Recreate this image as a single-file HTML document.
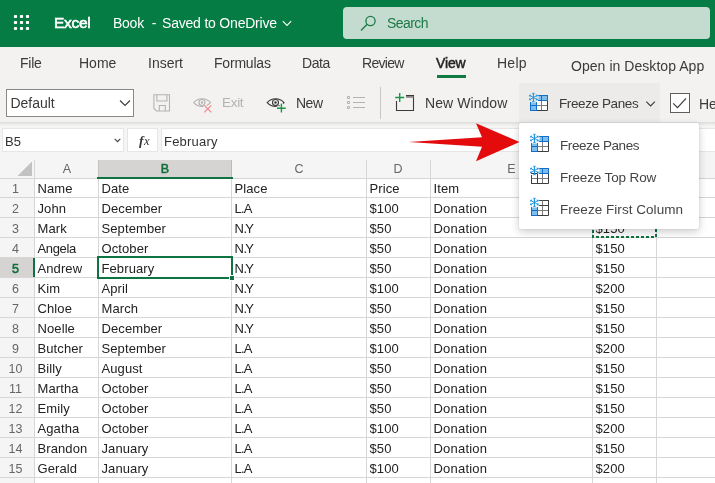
<!DOCTYPE html>
<html><head><meta charset="utf-8"><title>Excel</title>
<style>
*{box-sizing:border-box;margin:0;padding:0}
html,body{width:715px;height:483px;overflow:hidden;background:#fff;font-family:"Liberation Sans",sans-serif;}
body{position:relative}
.abs{position:absolute}
#hdr{position:absolute;left:0;top:0;width:715px;height:47px;background:#047c43}
#search{position:absolute;left:343px;top:7px;width:367px;height:32px;background:#c4dccf;border-radius:4px}
#searcht{position:absolute;left:44px;top:7px;font-size:14px;color:#1b7a47;line-height:18px}
.ht{position:absolute;top:12px;font-size:14px;color:#fff;line-height:22px;white-space:nowrap}
#excel{left:54px;font-size:16px;-webkit-text-stroke:0.6px #fff;letter-spacing:-0.2px}
#tabs{position:absolute;left:0;top:47px;width:715px;height:35px;background:#f3f2f1}
.tab{position:absolute;top:6px;font-size:14px;line-height:20px;color:#3b3a39;white-space:nowrap}
#ribbon{position:absolute;left:0;top:82px;width:715px;height:40px;background:#f3f2f1}
.rt{position:absolute;font-size:14px;line-height:20px;color:#3b3a39;white-space:nowrap;top:11px}
#fbar{position:absolute;left:0;top:122px;width:715px;height:38px;background:#f5f5f5}
.fbox{position:absolute;top:6px;height:24px;background:#fff;border:1px solid #e6e6e6}
.ft{position:absolute;top:10px;font-size:13px;line-height:20px;color:#333;white-space:nowrap}
#grid{position:absolute;left:0;top:0;width:715px;height:483px}
#grid,#hdr,#tabs,#ribbon,#fbar,#menu{will-change:transform}
.ch{position:absolute;top:161px;height:17px;font-size:12.5px;line-height:17px;color:#666;text-align:center}
.rh{position:absolute;left:0;width:34px;height:20px;font-size:12.5px;line-height:22px;color:#666;text-align:center;padding-right:3px}
.rh.sel{background:#d6d4d2;color:#0e703b;-webkit-text-stroke:0.55px #0e703b;height:19px;line-height:22px;border-right:2px solid #0d7341;width:35px;padding-right:2px}
.c{position:absolute;font-size:13px;letter-spacing:0.1px;line-height:22px;color:#222;white-space:nowrap;height:20px}
.hl{position:absolute;left:0;width:715px;height:1px;background:#d6d6d6}
.vl{position:absolute;top:160px;width:1px;height:323px;background:#d6d6d6}
#menu{position:absolute;left:519px;top:123px;width:180px;height:106px;background:#fff;border-radius:2px;box-shadow:0 3px 9px rgba(0,0,0,.20),0 0 2px rgba(0,0,0,.14)}
.mi{position:absolute;left:41px;font-size:14px;line-height:20px;color:#444;white-space:nowrap}
</style></head><body>

<div id="grid">
<div class="abs" style="left:0;top:160px;width:715px;height:19px;background:#f5f5f5"></div>
<div class="abs" style="left:0;top:160px;width:34px;height:323px;background:#f5f5f5"></div>
<div class="abs" style="left:98px;top:160px;width:133px;height:18px;background:#d6d4d2"></div>
<div class="abs" style="left:98px;top:160px;width:1px;height:17px;background:#c3c2c1;z-index:1"></div><div class="abs" style="left:231px;top:160px;width:1px;height:17px;background:#bcbbba;z-index:1"></div>
<div class="hl" style="top:178px"></div><div class="hl" style="top:197px"></div><div class="hl" style="top:217px"></div><div class="hl" style="top:237px"></div><div class="hl" style="top:257px"></div><div class="hl" style="top:277px"></div><div class="hl" style="top:297px"></div><div class="hl" style="top:317px"></div><div class="hl" style="top:337px"></div><div class="hl" style="top:357px"></div><div class="hl" style="top:377px"></div><div class="hl" style="top:397px"></div><div class="hl" style="top:417px"></div><div class="hl" style="top:437px"></div><div class="hl" style="top:457px"></div><div class="hl" style="top:477px"></div><div class="hl" style="top:497px"></div>
<div class="vl" style="left:34px"></div><div class="vl" style="left:98px"></div><div class="vl" style="left:231px"></div><div class="vl" style="left:366px"></div><div class="vl" style="left:430px"></div><div class="vl" style="left:592px"></div><div class="vl" style="left:656px"></div>
<div class="abs" style="left:97px;top:177px;width:136px;height:2px;background:#0d7341"></div>
<svg class="abs" style="left:17px;top:161px" width="16" height="16" viewBox="0 0 16 16"><path d="M15 0.500V15H0.500z" fill="#c2c2c2"/></svg>
<div class="ch" style="left:35px;width:64px">A</div>
<div class="ch" style="left:98px;width:134px;color:#0e703b;-webkit-text-stroke:0.55px #0e703b">B</div>
<div class="ch" style="left:232px;width:134px">C</div>
<div class="ch" style="left:366px;width:64px">D</div>
<div class="ch" style="left:430.5px;width:162px">E</div>
<div class="rh" style="top:178px">1</div><div class="c" id="c1_0" style="left:37.5px;top:178px">Name</div><div class="c" id="c1_1" style="left:101.5px;top:178px">Date</div><div class="c" id="c1_2" style="left:234.5px;top:178px">Place</div><div class="c" id="c1_3" style="left:369.5px;top:178px">Price</div><div class="c" id="c1_4" style="left:433.5px;top:178px">Item</div>
<div class="rh" style="top:198px">2</div><div class="c" id="c2_0" style="left:37.5px;top:198px">John</div><div class="c" id="c2_1" style="left:101.5px;top:198px">December</div><div class="c" id="c2_2" style="left:234.5px;top:198px">L<span style="margin-left:-0.8px;margin-right:-1px">.</span>A</div><div class="c" id="c2_3" style="left:369.5px;top:198px">$100</div><div class="c" id="c2_4" style="letter-spacing:0.2px;left:433.5px;top:198px">Donation</div>
<div class="rh" style="top:218px">3</div><div class="c" id="c3_0" style="left:37.5px;top:218px">Mark</div><div class="c" id="c3_1" style="left:101.5px;top:218px">September</div><div class="c" id="c3_2" style="left:234.5px;top:218px">N<span style="margin-left:-0.5px;margin-right:-2.1px">.</span>Y</div><div class="c" id="c3_3" style="left:369.5px;top:218px">$50</div><div class="c" id="c3_4" style="letter-spacing:0.2px;left:433.5px;top:218px">Donation</div><div class="c" id="c3_5" style="left:595.5px;top:218px">$150</div>
<div class="rh" style="top:238px">4</div><div class="c" id="c4_0" style="letter-spacing:-0.35px;left:37.5px;top:238px">Angela</div><div class="c" id="c4_1" style="left:101.5px;top:238px">October</div><div class="c" id="c4_2" style="left:234.5px;top:238px">N<span style="margin-left:-0.5px;margin-right:-2.1px">.</span>Y</div><div class="c" id="c4_3" style="left:369.5px;top:238px">$50</div><div class="c" id="c4_4" style="letter-spacing:0.2px;left:433.5px;top:238px">Donation</div><div class="c" id="c4_5" style="left:595.5px;top:238px">$150</div>
<div class="rh sel" style="top:258px">5</div><div class="c" id="c5_0" style="left:37.5px;top:258px">Andrew</div><div class="c" id="c5_1" style="left:101.5px;top:258px">February</div><div class="c" id="c5_2" style="left:234.5px;top:258px">N<span style="margin-left:-0.5px;margin-right:-2.1px">.</span>Y</div><div class="c" id="c5_3" style="left:369.5px;top:258px">$50</div><div class="c" id="c5_4" style="letter-spacing:0.2px;left:433.5px;top:258px">Donation</div><div class="c" id="c5_5" style="left:595.5px;top:258px">$150</div>
<div class="rh" style="top:278px">6</div><div class="c" id="c6_0" style="left:37.5px;top:278px">Kim</div><div class="c" id="c6_1" style="left:101.5px;top:278px">April</div><div class="c" id="c6_2" style="left:234.5px;top:278px">N<span style="margin-left:-0.5px;margin-right:-2.1px">.</span>Y</div><div class="c" id="c6_3" style="left:369.5px;top:278px">$100</div><div class="c" id="c6_4" style="letter-spacing:0.2px;left:433.5px;top:278px">Donation</div><div class="c" id="c6_5" style="left:595.5px;top:278px">$200</div>
<div class="rh" style="top:298px">7</div><div class="c" id="c7_0" style="left:37.5px;top:298px">Chloe</div><div class="c" id="c7_1" style="left:101.5px;top:298px">March</div><div class="c" id="c7_2" style="left:234.5px;top:298px">N<span style="margin-left:-0.5px;margin-right:-2.1px">.</span>Y</div><div class="c" id="c7_3" style="left:369.5px;top:298px">$50</div><div class="c" id="c7_4" style="letter-spacing:0.2px;left:433.5px;top:298px">Donation</div><div class="c" id="c7_5" style="left:595.5px;top:298px">$150</div>
<div class="rh" style="top:318px">8</div><div class="c" id="c8_0" style="left:37.5px;top:318px">Noelle</div><div class="c" id="c8_1" style="left:101.5px;top:318px">December</div><div class="c" id="c8_2" style="left:234.5px;top:318px">N<span style="margin-left:-0.5px;margin-right:-2.1px">.</span>Y</div><div class="c" id="c8_3" style="left:369.5px;top:318px">$50</div><div class="c" id="c8_4" style="letter-spacing:0.2px;left:433.5px;top:318px">Donation</div><div class="c" id="c8_5" style="left:595.5px;top:318px">$150</div>
<div class="rh" style="top:338px">9</div><div class="c" id="c9_0" style="left:37.5px;top:338px">Butcher</div><div class="c" id="c9_1" style="left:101.5px;top:338px">September</div><div class="c" id="c9_2" style="left:234.5px;top:338px">L<span style="margin-left:-0.8px;margin-right:-1px">.</span>A</div><div class="c" id="c9_3" style="left:369.5px;top:338px">$100</div><div class="c" id="c9_4" style="letter-spacing:0.2px;left:433.5px;top:338px">Donation</div><div class="c" id="c9_5" style="left:595.5px;top:338px">$200</div>
<div class="rh" style="top:358px">10</div><div class="c" id="c10_0" style="left:37.5px;top:358px">Billy</div><div class="c" id="c10_1" style="left:101.5px;top:358px">August</div><div class="c" id="c10_2" style="left:234.5px;top:358px">L<span style="margin-left:-0.8px;margin-right:-1px">.</span>A</div><div class="c" id="c10_3" style="left:369.5px;top:358px">$50</div><div class="c" id="c10_4" style="letter-spacing:0.2px;left:433.5px;top:358px">Donation</div><div class="c" id="c10_5" style="left:595.5px;top:358px">$150</div>
<div class="rh" style="top:378px">11</div><div class="c" id="c11_0" style="left:37.5px;top:378px">Martha</div><div class="c" id="c11_1" style="left:101.5px;top:378px">October</div><div class="c" id="c11_2" style="left:234.5px;top:378px">L<span style="margin-left:-0.8px;margin-right:-1px">.</span>A</div><div class="c" id="c11_3" style="left:369.5px;top:378px">$50</div><div class="c" id="c11_4" style="letter-spacing:0.2px;left:433.5px;top:378px">Donation</div><div class="c" id="c11_5" style="left:595.5px;top:378px">$150</div>
<div class="rh" style="top:398px">12</div><div class="c" id="c12_0" style="left:37.5px;top:398px">Emily</div><div class="c" id="c12_1" style="left:101.5px;top:398px">October</div><div class="c" id="c12_2" style="left:234.5px;top:398px">L<span style="margin-left:-0.8px;margin-right:-1px">.</span>A</div><div class="c" id="c12_3" style="left:369.5px;top:398px">$50</div><div class="c" id="c12_4" style="letter-spacing:0.2px;left:433.5px;top:398px">Donation</div><div class="c" id="c12_5" style="left:595.5px;top:398px">$150</div>
<div class="rh" style="top:418px">13</div><div class="c" id="c13_0" style="left:37.5px;top:418px">Agatha</div><div class="c" id="c13_1" style="left:101.5px;top:418px">October</div><div class="c" id="c13_2" style="left:234.5px;top:418px">L<span style="margin-left:-0.8px;margin-right:-1px">.</span>A</div><div class="c" id="c13_3" style="left:369.5px;top:418px">$100</div><div class="c" id="c13_4" style="letter-spacing:0.2px;left:433.5px;top:418px">Donation</div><div class="c" id="c13_5" style="left:595.5px;top:418px">$200</div>
<div class="rh" style="top:438px">14</div><div class="c" id="c14_0" style="left:37.5px;top:438px">Brandon</div><div class="c" id="c14_1" style="left:101.5px;top:438px">January</div><div class="c" id="c14_2" style="left:234.5px;top:438px">L<span style="margin-left:-0.8px;margin-right:-1px">.</span>A</div><div class="c" id="c14_3" style="left:369.5px;top:438px">$50</div><div class="c" id="c14_4" style="letter-spacing:0.2px;left:433.5px;top:438px">Donation</div><div class="c" id="c14_5" style="left:595.5px;top:438px">$150</div>
<div class="rh" style="top:458px">15</div><div class="c" id="c15_0" style="left:37.5px;top:458px">Gerald</div><div class="c" id="c15_1" style="left:101.5px;top:458px">January</div><div class="c" id="c15_2" style="left:234.5px;top:458px">L<span style="margin-left:-0.8px;margin-right:-1px">.</span>A</div><div class="c" id="c15_3" style="left:369.5px;top:458px">$100</div><div class="c" id="c15_4" style="letter-spacing:0.2px;left:433.5px;top:458px">Donation</div><div class="c" id="c15_5" style="left:595.5px;top:458px">$200</div>

<div class="abs" style="left:97px;top:256px;width:136px;height:23px;border:2px solid #0d7341"></div>
<div class="abs" style="left:229px;top:275px;width:6px;height:6px;background:#0d7341;border:1px solid #fff"></div>
<svg class="abs" style="left:590px;top:215px" width="70" height="26" viewBox="590 215 70 26"><rect x="593" y="218" width="63" height="19" fill="none" stroke="#0d7341" stroke-width="2" stroke-dasharray="3 2" stroke-dashoffset="1"/></svg>
</div>

<div id="hdr">
<svg class="abs" style="left:12px;top:13px" width="20" height="20" viewBox="0 0 20 20" fill="#fff">
<rect x="1.9" y="1.9" width="3.200" height="3.200" rx="1"/><rect x="7.9" y="1.9" width="3.200" height="3.200" rx="1"/><rect x="13.9" y="1.9" width="3.200" height="3.200" rx="1"/><rect x="1.9" y="7.9" width="3.200" height="3.200" rx="1"/><rect x="7.9" y="7.9" width="3.200" height="3.200" rx="1"/><rect x="13.9" y="7.9" width="3.200" height="3.200" rx="1"/><rect x="1.9" y="13.9" width="3.200" height="3.200" rx="1"/><rect x="7.9" y="13.9" width="3.200" height="3.200" rx="1"/><rect x="13.9" y="13.9" width="3.200" height="3.200" rx="1"/>
</svg>
<div class="ht" id="excel" style="font-size:15.5px;letter-spacing:-0.3px">Excel</div>
<div class="ht" id="book" style="letter-spacing:-0.25px;left:113px">Book</div>
<div class="ht" id="dash" style="left:151.7px">-</div>
<div class="ht" id="saved" style="letter-spacing:-0.2px;left:162px">Saved to OneDrive</div>
<svg class="abs" style="left:281px;top:19px" width="12" height="8" viewBox="0 0 12 8"><path d="M1.800 2.200L6 6.400l4.200-4.200" stroke="#fff" stroke-width="1.100" fill="none"/></svg>
<div id="search">
<svg class="abs" style="left:17px;top:8px" width="17" height="17" viewBox="0 0 17 17"><circle cx="10.500" cy="6" r="4.600" stroke="#1b7a47" stroke-width="1.300" fill="none"/><path d="M7.200 9.300L1 15.500" stroke="#1b7a47" stroke-width="1.300"/></svg>
<span id="searcht" style="font-size:14px;letter-spacing:-0.55px">Search</span></div>
</div>

<div id="tabs">
<div class="tab" id="tFile" style="letter-spacing:-0.25px;left:20px">File</div>
<div class="tab" id="tHome" style="left:79px">Home</div>
<div class="tab" id="tInsert" style="left:148px">Insert</div>
<div class="tab" id="tFormulas" style="letter-spacing:-0.2px;left:214px">Formulas</div>
<div class="tab" id="tData" style="letter-spacing:-0.45px;left:302px">Data</div>
<div class="tab" id="tReview" style="letter-spacing:-0.7px;left:362px">Review</div>
<div class="tab" id="tView" style="letter-spacing:-0.15px;left:436px;color:#252423;-webkit-text-stroke:0.5px #252423">View</div>
<div class="abs" style="left:437px;top:28px;width:29px;height:3px;background:#107c41"></div>
<div class="tab" id="tHelp" style="letter-spacing:0.25px;left:497px">Help</div>
<div class="tab" id="tOpen" style="letter-spacing:0.05px;left:571px;top:9px">Open in Desktop App</div>
</div>

<div id="ribbon">
<div class="abs" style="left:6px;top:7px;width:128px;height:28px;background:#fff;border:1px solid #8a8886"></div>
<div class="rt" id="rDefault" style="left:10.4px;top:11px">Default</div>
<svg class="abs" style="left:119px;top:17px" width="12" height="8" viewBox="0 0 12 8"><path d="M1 1.500L6 6.500l5-5" stroke="#3b3a39" stroke-width="1.100" fill="none"/></svg>

<svg class="abs" style="left:152px;top:11px" width="20" height="20" viewBox="0 0 20 20"><path d="M1.900 1.700h15.600v16.300h-13l-2.600-2.600z M4.900 1.700v6.300h10v-6.300 M7.300 18v-5.500h6v5.500" stroke="#b5b3b1" stroke-width="1.100" fill="none"/></svg>

<svg class="abs" style="left:192px;top:13px" width="22" height="20" viewBox="0 0 22 20"><path d="M1.700 7.600c2.400-2.800 5.300-3.900 8.400-3.900s6 1.100 8.400 3.900c-2.400 2.700-5.300 3.800-8.400 3.800s-6-1.100-8.400-3.800z" stroke="#b5b3b1" stroke-width="1.100" fill="none"/><circle cx="10" cy="7.500" r="3" stroke="#b5b3b1" stroke-width="1.100" fill="none"/><circle cx="10" cy="7.500" r="1.200" fill="#b5b3b1"/><path d="M12.300 10.300l7 7M19.300 10.300l-7 7" stroke="#f3f2f1" stroke-width="3"/><path d="M12.300 10.300l7 7M19.300 10.300l-7 7" stroke="#f5868e" stroke-width="1.200"/></svg>
<div class="rt" id="rExit" style="font-size:13.5px;letter-spacing:-0.3px;left:222px;color:#b5b3b1">Exit</div>

<svg class="abs" style="left:266px;top:13px" width="22" height="20" viewBox="0 0 22 20"><path d="M1.200 7.600c2.400-2.800 5.300-3.900 8.400-3.900s6 1.100 8.400 3.900c-2.400 2.700-5.300 3.800-8.400 3.800s-6-1.100-8.400-3.800z" stroke="#3b3a39" stroke-width="1.100" fill="none"/><circle cx="9.500" cy="7.500" r="3" stroke="#3b3a39" stroke-width="1.100" fill="none"/><circle cx="9.500" cy="7.500" r="1.200" fill="#3b3a39"/><path d="M15.400 8.300v9.400M10.700 13h9.400" stroke="#f3f2f1" stroke-width="3.400"/><path d="M15.400 8.800v8.800M11 13.200h8.800" stroke="#159947" stroke-width="1.400"/></svg>
<div class="rt" id="rNew" style="letter-spacing:-0.5px;left:296px">New</div>

<svg class="abs" style="left:346px;top:13px" width="20" height="16" viewBox="0 0 20 16"><path d="M1.500 1.500h2v2h-2zM1.500 6.500h2v2h-2zM1.500 11.500h2v2h-2z" stroke="#b5b3b1" stroke-width="1" fill="none"/><path d="M7 2.500h12M7 7.500h12M7 12.500h12" stroke="#b5b3b1" stroke-width="1.100"/></svg>
<div class="abs" style="left:380px;top:5px;width:1px;height:32px;background:#c8c6c4"></div>

<svg class="abs" style="left:393px;top:9px" width="24" height="22" viewBox="0 0 24 22"><path d="M3.500 10v9.500h17v-15h-7.500" stroke="#3b3a39" stroke-width="1.100" fill="none"/><path d="M13 5.900h7.500" stroke="#8a8886" stroke-width="1.800"/><path d="M6.700 2v9M2.200 6.500h9" stroke="#159947" stroke-width="1.400"/></svg>
<div class="rt" id="rNewWin" style="letter-spacing:0.07px;left:425px">New Window</div>

<div class="abs" style="left:519px;top:1px;width:141px;height:40px;background:#edebe9"></div>
<svg class="abs" style="left:526px;top:9px" width="24" height="22" viewBox="0 0 24 22"><rect x="10.5" y="4.5" width="11" height="5" fill="#7fbdef" stroke="#1470c6" stroke-width="1"/><path d="M15.500 4.500v5" stroke="#1470c6" stroke-width="1"/><rect x="4.5" y="9.5" width="6" height="10" fill="#7fbdef" stroke="#1470c6" stroke-width="1"/><path d="M4.500 14.500h6" stroke="#1470c6" stroke-width="1"/><circle cx="7.400" cy="6.500" r="5.200" fill="#edebe9"/><rect x="10.5" y="9.5" width="11" height="10" fill="#fff"/><path d="M15.500 9.500v10M10.500 14.500h11" stroke="#7d7b79" stroke-width="1" fill="none"/><path d="M21.500 9.500v10h-11" stroke="#3f3e3c" stroke-width="1" fill="none"/><path d="M12.2 9.500H22" stroke="#1470c6" stroke-width="1"/><path d="M10.500 11.2V20" stroke="#1470c6" stroke-width="1"/><g stroke="#1f93dc" fill="none"><path d="M7.4 2.200V10.800" stroke-width="1.100"/><path d="M6.100 2.300h2.600M6.100 10.700h2.600" stroke-width="0.9"/><path d="M3.600 4.400L11.200 8.600M3.600 8.600L11.200 4.400" stroke-width="0.95"/></g><path d="M3.00 3.95L3.82 6.21L5.36 3.53Z" fill="#1f93dc"/><path d="M11.80 3.95L10.98 6.21L9.44 3.53Z" fill="#1f93dc"/><path d="M3.00 9.05L3.82 6.79L5.36 9.47Z" fill="#1f93dc"/><path d="M11.80 9.05L10.98 6.79L9.44 9.47Z" fill="#1f93dc"/></svg>
<div class="rt" id="rFreeze" style="font-size:13.5px;letter-spacing:-0.4px;top:11.6px;left:559px">Freeze Panes</div>
<svg class="abs" style="left:645px;top:17.5px" width="12" height="8" viewBox="0 0 12 8"><path d="M1.300 1.700L5.600 6l4.300-4.300" stroke="#3b3a39" stroke-width="1.100" fill="none"/></svg>
<div class="abs" style="left:670px;top:11px;width:20px;height:20px;background:#fff;border:1px solid #605e5c"></div>
<svg class="abs" style="left:670px;top:11px" width="20" height="20" viewBox="0 0 20 20"><path d="M3.200 10.300l4.300 4.300L16 5.400" stroke="#3b3a39" stroke-width="1.200" fill="none"/></svg>
<div class="rt" style="left:699px;top:12px">He</div>
</div>

<div id="fbar">
<div class="abs" style="left:0;top:0;width:715px;height:4px;background:linear-gradient(#dedddc,#f5f5f5)"></div>
<div class="fbox" style="left:2px;width:122px"></div>
<div class="ft" id="fB5" style="left:5px">B5</div>
<svg class="abs" style="left:113px;top:15px" width="9" height="7" viewBox="0 0 9 7"><path d="M1.700 1.800l2.800 2.800 2.800-2.800" stroke="#444" stroke-width="1.200" fill="none"/></svg>
<div class="fbox" style="left:127px;width:31px"></div>
<div class="abs" id="fx" style="left:139px;top:9px;font-family:'Liberation Serif',serif;font-style:italic;font-weight:bold;font-size:13.5px;line-height:20px;color:#333">f<span style="font-size:12.5px;margin-left:0.5px;font-weight:normal">x</span></div>
<div class="fbox" style="left:161px;width:560px"></div>
<div class="ft" id="fFeb" style="letter-spacing:0.2px;left:164px">February</div>
</div>

<div id="menu">
<svg class="abs" style="left:8px;top:9px" width="24" height="22" viewBox="0 0 24 22"><rect x="10.5" y="4.5" width="11" height="5" fill="#7fbdef" stroke="#1470c6" stroke-width="1"/><path d="M15.500 4.500v5" stroke="#1470c6" stroke-width="1"/><rect x="4.5" y="9.5" width="6" height="10" fill="#7fbdef" stroke="#1470c6" stroke-width="1"/><path d="M4.500 14.500h6" stroke="#1470c6" stroke-width="1"/><circle cx="7.400" cy="6.500" r="5.200" fill="#fff"/><rect x="10.5" y="9.5" width="11" height="10" fill="#fff"/><path d="M15.500 9.500v10M10.500 14.500h11" stroke="#7d7b79" stroke-width="1" fill="none"/><path d="M21.500 9.500v10h-11" stroke="#3f3e3c" stroke-width="1" fill="none"/><path d="M12.2 9.500H22" stroke="#1470c6" stroke-width="1"/><path d="M10.500 11.2V20" stroke="#1470c6" stroke-width="1"/><g stroke="#1f93dc" fill="none"><path d="M7.4 2.200V10.800" stroke-width="1.100"/><path d="M6.100 2.300h2.600M6.100 10.700h2.600" stroke-width="0.9"/><path d="M3.600 4.400L11.200 8.600M3.600 8.600L11.200 4.400" stroke-width="0.95"/></g><path d="M3.00 3.95L3.82 6.21L5.36 3.53Z" fill="#1f93dc"/><path d="M11.80 3.95L10.98 6.21L9.44 3.53Z" fill="#1f93dc"/><path d="M3.00 9.05L3.82 6.79L5.36 9.47Z" fill="#1f93dc"/><path d="M11.80 9.05L10.98 6.79L9.44 9.47Z" fill="#1f93dc"/></svg>
<div class="mi" id="m1" style="font-size:13.5px;letter-spacing:-0.41px;margin-top:0.6px;top:12px">Freeze Panes</div>
<svg class="abs" style="left:8px;top:41px" width="24" height="22" viewBox="0 0 24 22"><rect x="10.5" y="4.5" width="11" height="5" fill="#7fbdef" stroke="#1470c6" stroke-width="1"/><path d="M15.500 4.500v5" stroke="#1470c6" stroke-width="1"/><rect x="4.5" y="9.5" width="6" height="10" fill="#fff" stroke="#3f3e3c" stroke-width="1"/><path d="M4.500 14.500h6" stroke="#7d7b79" stroke-width="1"/><circle cx="7.400" cy="6.500" r="5.200" fill="#fff"/><path d="M4.500 9v1M4.500 9.500h6" stroke="#3f3e3c" stroke-width="1"/><rect x="10.5" y="9.5" width="11" height="10" fill="#fff"/><path d="M15.500 9.500v10M10.500 14.500h11" stroke="#7d7b79" stroke-width="1" fill="none"/><path d="M21.500 9.500v10h-11" stroke="#3f3e3c" stroke-width="1" fill="none"/><path d="M12.2 9.500H22" stroke="#1470c6" stroke-width="1"/><path d="M10.500 9.5V20" stroke="#3f3e3c" stroke-width="1"/><g stroke="#1f93dc" fill="none"><path d="M7.4 2.200V10.800" stroke-width="1.100"/><path d="M6.100 2.300h2.600M6.100 10.700h2.600" stroke-width="0.9"/><path d="M3.600 4.400L11.200 8.600M3.600 8.600L11.200 4.400" stroke-width="0.95"/></g><path d="M3.00 3.95L3.82 6.21L5.36 3.53Z" fill="#1f93dc"/><path d="M11.80 3.95L10.98 6.21L9.44 3.53Z" fill="#1f93dc"/><path d="M3.00 9.05L3.82 6.79L5.36 9.47Z" fill="#1f93dc"/><path d="M11.80 9.05L10.98 6.79L9.44 9.47Z" fill="#1f93dc"/></svg>
<div class="mi" id="m2" style="font-size:13.5px;letter-spacing:-0.13px;margin-top:0.6px;top:44px">Freeze Top Row</div>
<svg class="abs" style="left:8px;top:73px" width="24" height="22" viewBox="0 0 24 22"><rect x="10.5" y="4.5" width="11" height="5" fill="#fff" stroke="#3f3e3c" stroke-width="1"/><path d="M15.500 4.500v5" stroke="#7d7b79" stroke-width="1"/><rect x="4.5" y="9.5" width="6" height="10" fill="#7fbdef" stroke="#1470c6" stroke-width="1"/><path d="M4.500 14.500h6" stroke="#1470c6" stroke-width="1"/><circle cx="7.400" cy="6.500" r="5.200" fill="#fff"/><rect x="10.5" y="9.5" width="11" height="10" fill="#fff"/><path d="M15.500 9.500v10M10.500 14.500h11" stroke="#7d7b79" stroke-width="1" fill="none"/><path d="M21.500 9.500v10h-11" stroke="#3f3e3c" stroke-width="1" fill="none"/><path d="M12.2 9.500H22" stroke="#3f3e3c" stroke-width="1"/><path d="M10.500 11.2V20" stroke="#1470c6" stroke-width="1"/><g stroke="#1f93dc" fill="none"><path d="M7.4 2.200V10.800" stroke-width="1.100"/><path d="M6.100 2.300h2.600M6.100 10.700h2.600" stroke-width="0.9"/><path d="M3.600 4.400L11.200 8.600M3.600 8.600L11.200 4.400" stroke-width="0.95"/></g><path d="M3.00 3.95L3.82 6.21L5.36 3.53Z" fill="#1f93dc"/><path d="M11.80 3.95L10.98 6.21L9.44 3.53Z" fill="#1f93dc"/><path d="M3.00 9.05L3.82 6.79L5.36 9.47Z" fill="#1f93dc"/><path d="M11.80 9.05L10.98 6.79L9.44 9.47Z" fill="#1f93dc"/></svg>
<div class="mi" id="m3" style="font-size:13.5px;letter-spacing:0.04px;margin-top:0.6px;top:76px">Freeze First Column</div>
</div>

<svg class="abs" style="left:400px;top:115px" width="130" height="55" viewBox="400 115 130 55"><path d="M408.600 142L482 137.300L476 123.200L519.500 142L476 161.200L482 146.700Z" fill="#e30b0b"/></svg>

</body></html>
